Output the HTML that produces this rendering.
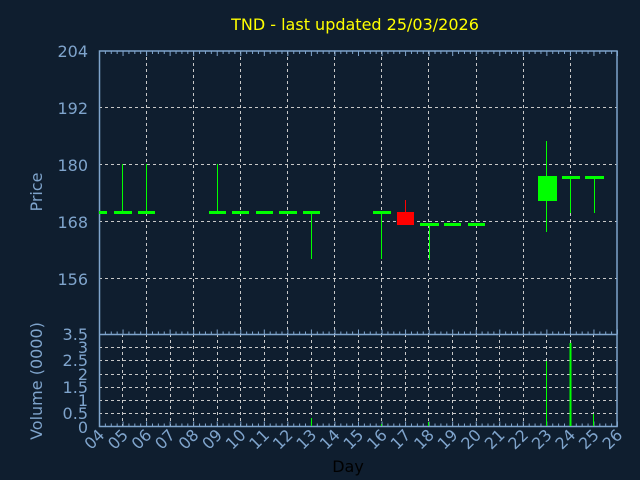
<!DOCTYPE html>
<html><head><style>html,body{margin:0;padding:0;background:#0f1e2f;}svg{display:block}</style></head><body>
<svg width="640" height="480" viewBox="0 0 640 480" xmlns="http://www.w3.org/2000/svg" font-family="DejaVu Sans, Liberation Sans, sans-serif">
<rect width="640" height="480" fill="#0f1e2f"/>
<text x="355" y="30" fill="#ffff00" font-size="16" text-anchor="middle">TND - last updated 25/03/2026</text>
<g stroke="#c8c8c8" stroke-width="1" stroke-dasharray="3,3" fill="none">
<path d="M99 107.5H617M99 164.5H617M99 221.5H617M99 278.5H617"/>
<path d="M146.5 51V334M193.5 51V334M240.5 51V334M287.5 51V334M334.5 51V334M381.5 51V334M428.5 51V334M476.5 51V334M523.5 51V334M570.5 51V334"/>
<path d="M99 413.5H617M99 400.5H617M99 387.5H617M99 374.5H617M99 360.5H617M99 347.5H617"/>
<path d="M122.5 334V426M146.5 334V426M170.5 334V426M193.5 334V426M217.5 334V426M240.5 334V426M264.5 334V426M287.5 334V426M311.5 334V426M334.5 334V426M358.5 334V426M381.5 334V426M405.5 334V426M428.5 334V426M452.5 334V426M476.5 334V426M499.5 334V426M523.5 334V426M546.5 334V426M570.5 334V426M593.5 334V426"/>
</g>
<g stroke="#7fa4cc" stroke-width="1.5" fill="none">
<rect x="99.5" y="51" width="517.5" height="375.5"/>
<path d="M99.5 334.5H617"/>
</g>
<g id="ticks" stroke="#7fa4cc" stroke-width="1"></g>
<g fill="#7fa4cc" font-size="16" text-anchor="end">
<text x="88" y="57">204</text><text x="88" y="114">192</text><text x="88" y="171">180</text><text x="88" y="228">168</text><text x="88" y="285">156</text>
<text x="88" y="340">3.5</text><text x="88" y="353">3</text><text x="88" y="366">2.5</text><text x="88" y="380">2</text><text x="88" y="393">1.5</text><text x="88" y="406">1</text><text x="88" y="419">0.5</text><text x="88" y="433">0</text>
</g>
<text transform="translate(42,192) rotate(-90)" fill="#7fa4cc" font-size="16" text-anchor="middle">Price</text>
<text transform="translate(42,381) rotate(-90)" fill="#7fa4cc" font-size="16" text-anchor="middle">Volume (0000)</text>
<text x="348" y="472" fill="#000" font-size="16" text-anchor="middle">Day</text>
<g fill="#7fa4cc" font-size="16" text-anchor="end" id="xl"></g>
<g stroke="#00ff00" stroke-width="1" fill="none">
<path d="M122.5 164V212M146.5 164V212M217.5 164V212M311.5 212V259M381.5 212V259M429.5 224V260M546.5 141V232M570.5 177V213M594.5 177V213"/>
<path d="M546.5 361V426M570.5 343V426M593.5 414V426M311.5 418V426M381.5 424V426M428.5 422V426" />
</g>
<path d="M570.5 343V426" stroke="#00ff00" stroke-width="2"/>
<g fill="#00ff00">
<rect x="99" y="211" width="8" height="3"/>
<rect x="114" y="211" width="18" height="3"/><rect x="138" y="211" width="17" height="3"/>
<rect x="209" y="211" width="17" height="3"/><rect x="232" y="211" width="17" height="3"/><rect x="256" y="211" width="17" height="3"/><rect x="279" y="211" width="18" height="3"/><rect x="303" y="211" width="17" height="3"/>
<rect x="373" y="211" width="18" height="3"/>
<rect x="420" y="223" width="19" height="3"/><rect x="444" y="223" width="17" height="3"/><rect x="468" y="223" width="17" height="3"/>
<rect x="538" y="176" width="19" height="25"/>
<rect x="562" y="176" width="18" height="3"/><rect x="585" y="176" width="19" height="3"/>
</g>
<path d="M405.5 200V212" stroke="#ff0000" stroke-width="1"/>
<rect x="397" y="212" width="17" height="13" fill="#ff0000"/>
<script>
var t=document.getElementById('ticks'),s='',x0=99.5,w=23.545;
for(var i=0;i<=88;i++){var x=x0+i*w/4;var L=(i%4==0)?5:3;s+='M'+x+' 51v'+L+'M'+x+' 426.5v-'+L+'M'+x+' 334.5v-'+L;}
var p=document.createElementNS('http://www.w3.org/2000/svg','path');p.setAttribute('d',s);t.appendChild(p);
var g=document.getElementById('xl');
for(var d=4;d<=26;d++){var x=x0+(d-4)*w;var e=document.createElementNS('http://www.w3.org/2000/svg','text');e.setAttribute('transform','translate('+(x+6)+',436) rotate(-45)');e.textContent=(d<10?'0':'')+d;g.appendChild(e);}
</script>
</svg>
</body></html>
